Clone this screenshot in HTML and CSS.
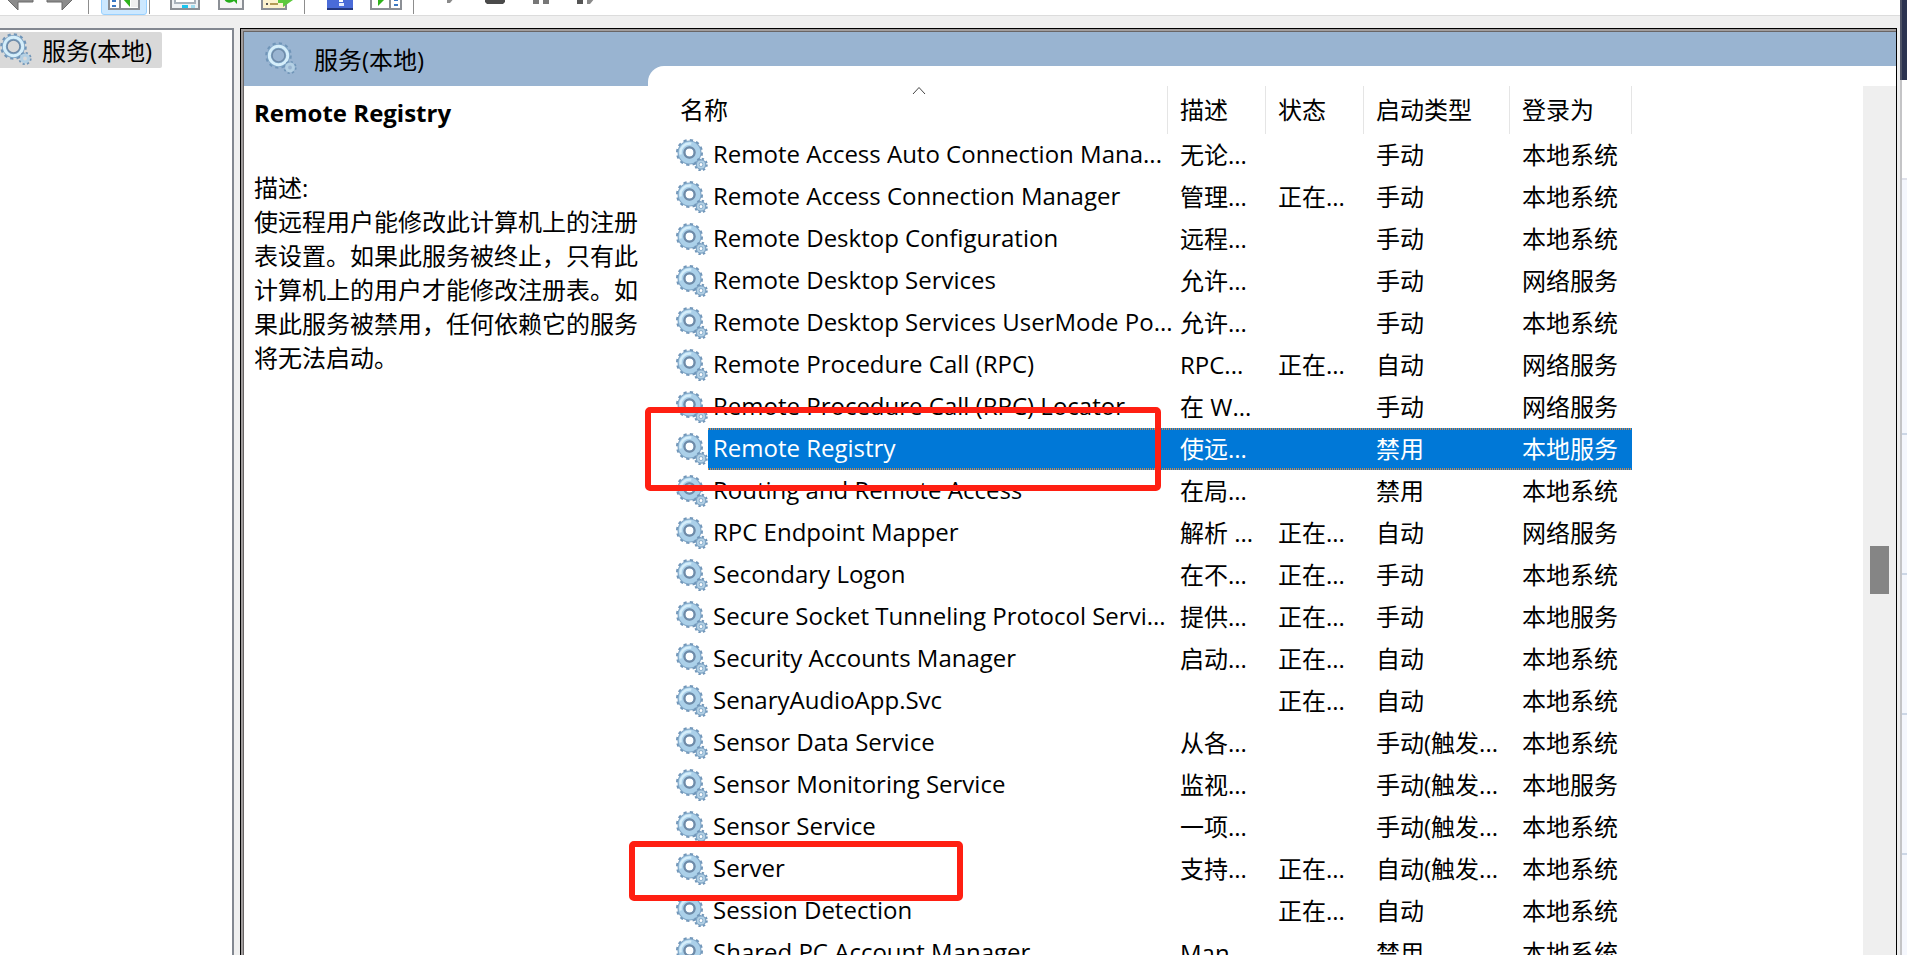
FILE: index.html
```
<!DOCTYPE html>
<html lang="zh-CN">
<head>
  <meta charset="UTF-8"/>
  <title>服务</title>
  <meta name="viewport" content="width=device-width,initial-scale=1"/>
  <link rel="stylesheet" href="styles.css">
</head>
<body>

<!-- Shared gear icons -->
<svg class="defs" aria-hidden="true">
  <symbol id="gear" viewBox="0 0 32 32">
    <g fill="none">
      <circle class="gear-teeth" cx="13.5" cy="13.5" r="12" stroke-width="3" stroke-dasharray="3.14 3.14"/>
      <circle class="gear-edge" cx="13.5" cy="13.5" r="8" stroke-width="8"/>
      <circle class="gear-body" cx="13.5" cy="13.5" r="8.4" stroke-width="5"/>
      <circle class="gear-shine" cx="13.5" cy="13.5" r="9" stroke-width="2.4" stroke-dasharray="18 38.5" stroke-dashoffset="-26"/>
      <circle class="gear-hole" cx="13.5" cy="13.5" r="5.2" stroke-width="2"/>
      <circle class="gear-teeth" cx="25" cy="25.5" r="5.6" stroke-width="2.4" stroke-dasharray="2.2 2.2"/>
      <circle class="gear-edge" cx="25" cy="25.5" r="3.4" stroke-width="3.8"/>
      <circle class="gear-small" cx="25" cy="25.5" r="3.2" stroke-width="1.8"/>
    </g>
  </symbol>
  <symbol id="gear-light" viewBox="0 0 32 32">
    <g fill="none">
      <circle class="gear-teeth" cx="13.5" cy="13.5" r="12" stroke-width="2.6" stroke-dasharray="3.14 3.14"/>
      <circle class="gear-edge" cx="13.5" cy="13.5" r="9" stroke-width="5"/>
      <circle class="gear-shine" cx="13.5" cy="13.5" r="9.200" stroke-width="3"/>
      <circle class="gear-hole" cx="13.5" cy="13.5" r="6.4" stroke-width="1.4"/>
      <circle class="gear-teeth" cx="25" cy="25.5" r="5.6" stroke-width="2" stroke-dasharray="2.2 2.2"/>
      <circle class="gear-small" cx="25" cy="25.5" r="3.4" stroke-width="3"/>
    </g>
  </symbol>
</svg>

<div class="screen">
  <div class="window">

    <!-- Toolbar -->
    <div class="toolbar">
      <button class="tool" title="后退">
        <svg viewBox="0 0 32 32"><path d="M2 17 15 5v10h15v7H15v8z" fill="#8c8c8c" stroke="#6b6b6b"/></svg>
      </button>
      <button class="tool" title="前进">
        <svg viewBox="0 0 32 32"><path d="M30 17 17 5v10H2v7h15v8z" fill="#8c8c8c" stroke="#6b6b6b"/></svg>
      </button>
      <span class="sep"></span>
      <button class="tool active" title="显示/隐藏控制台树">
        <svg viewBox="0 0 32 32"><path d="M1 3h30v26H1z" fill="#fff" stroke="#8b8f95" stroke-width="2"/><path d="M12 3v26" stroke="#8b8f95" stroke-width="2"/><path d="M4 17h4M4 21h4M4 26h4" stroke="#3a78c3" stroke-width="2"/><path d="M23 10v17h7V10" fill="#efefef"/><path d="M15 19l7-7v15z" fill="#2fb31b"/></svg>
      </button>
      <span class="sep"></span>
      <button class="tool" title="属性">
        <svg viewBox="0 0 32 32"><path d="M2 3h28v26H2z" fill="#eef1f4" stroke="#8b8f95" stroke-width="2"/><path d="M6 6h20v17H6z" fill="#fff" stroke="#a9b2bb" stroke-width="2"/><path d="M13 26.5h6" stroke="#1cc4ee" stroke-width="3"/><path d="M22 26.5h4" stroke="#9fdcef" stroke-width="3"/></svg>
      </button>
      <button class="tool" title="刷新">
        <svg viewBox="0 0 32 32"><path d="M4 3h24v26H4z" fill="#f5f5f5" stroke="#8b8f95" stroke-width="2"/><path d="M9 18c1 5 6 6 10 3l3 3v-8h-8l2 3c-2 1-4 1-5-1z" fill="#25ad1b"/></svg>
      </button>
      <button class="tool" title="导出列表">
        <svg viewBox="0 0 32 32"><path d="M1 3h24v26H1z" fill="#fdf3cf" stroke="#8b8f95" stroke-width="2"/><path d="M5 19h2M5 24h2" stroke="#555" stroke-width="2"/><path d="M9 19h7M9 24h8" stroke="#b49a55" stroke-width="2"/><path d="M17 17h7v-5l8 8-10 7v-4h-5z" fill="#5dc93e"/></svg>
      </button>
      <span class="sep"></span>
      <button class="tool" title="帮助">
        <svg viewBox="0 0 32 32"><path d="M3 3h26v27H3z" fill="#4a6bd8"/><path d="M3 29h26" stroke="#24387f" stroke-width="2"/><path d="M15 15h7v5h-3v2h-4z" fill="#fff"/><path d="M15 23h5v3h-5z" fill="#e6ecff"/></svg>
      </button>
      <button class="tool" title="显示/隐藏操作窗格">
        <svg viewBox="0 0 32 32"><path d="M1 3h30v26H1z" fill="#fff" stroke="#8b8f95" stroke-width="2"/><path d="M20 3v26" stroke="#8b8f95" stroke-width="2"/><path d="M8 12v14l7-7z" fill="#2fb31b"/><path d="M24 16h4M24 20h4M24 25h4" stroke="#3a78c3" stroke-width="2"/></svg>
      </button>
      <span class="sep"></span>
      <button class="tool" title="启动">
        <svg viewBox="0 0 32 32"><path d="M14 5v18h3l5-6z" fill="#8a8a8a"/></svg>
      </button>
      <button class="tool" title="停止">
        <svg viewBox="0 0 32 32"><path d="M6 6h20v16l-2 2H8l-2-2z" fill="#4a4a4a"/></svg>
      </button>
      <button class="tool" title="暂停">
        <svg viewBox="0 0 32 32"><path d="M8 6h6v18H8zM18 6h6v18h-6z" fill="#777"/></svg>
      </button>
      <button class="tool" title="重新启动">
        <svg viewBox="0 0 32 32"><path d="M6 6h6v18H6z" fill="#555"/><path d="M16 5v19h3l5-6z" fill="#8a8a8a"/></svg>
      </button>
    </div>

    <div class="content">
      <!-- Console tree -->
      <nav class="tree">
        <a class="tree-item" href="#services">
          <svg class="gear"><use href="#gear-light"/></svg>服务(本地)
        </a>
      </nav>

      <!-- Services -->
      <main class="pane" id="services">
        <header class="pane-head">
          <div class="pane-title">
            <svg class="gear"><use href="#gear-light"/></svg>服务(本地)
          </div>
          <div class="pane-tab"></div>
        </header>

        <div class="pane-body">
          <section class="detail">
            <h1>Remote Registry</h1>
            <p>描述:<br>使远程用户能修改此计算机上的注册表设置。如果此服务被终止，只有此计算机上的用户才能修改注册表。如果此服务被禁用，任何依赖它的服务将无法启动。</p>
          </section>

          <div class="list">
            <table>
              <colgroup>
                <col class="c-name"><col class="c-desc"><col class="c-state"><col class="c-start"><col class="c-logon">
              </colgroup>
              <thead>
                <tr>
                  <th>名称<svg class="sort" viewBox="0 0 14 9"><path d="M1 8 7 1.5 13 8" fill="none" stroke="#444"/></svg></th>
                  <th>描述</th><th>状态</th><th>启动类型</th><th>登录为</th>
                </tr>
              </thead>
              <tbody>
                <tr><td><div class="name"><svg class="gear"><use href="#gear"/></svg><span>Remote Access Auto Connection Mana...</span></div></td><td>无论...</td><td></td><td>手动</td><td>本地系统</td></tr>
                <tr><td><div class="name"><svg class="gear"><use href="#gear"/></svg><span>Remote Access Connection Manager</span></div></td><td>管理...</td><td>正在...</td><td>手动</td><td>本地系统</td></tr>
                <tr><td><div class="name"><svg class="gear"><use href="#gear"/></svg><span>Remote Desktop Configuration</span></div></td><td>远程...</td><td></td><td>手动</td><td>本地系统</td></tr>
                <tr><td><div class="name"><svg class="gear"><use href="#gear"/></svg><span>Remote Desktop Services</span></div></td><td>允许...</td><td></td><td>手动</td><td>网络服务</td></tr>
                <tr><td><div class="name"><svg class="gear"><use href="#gear"/></svg><span>Remote Desktop Services UserMode Po...</span></div></td><td>允许...</td><td></td><td>手动</td><td>本地系统</td></tr>
                <tr><td><div class="name"><svg class="gear"><use href="#gear"/></svg><span>Remote Procedure Call (RPC)</span></div></td><td>RPC...</td><td>正在...</td><td>自动</td><td>网络服务</td></tr>
                <tr><td><div class="name"><svg class="gear"><use href="#gear"/></svg><span>Remote Procedure Call (RPC) Locator</span></div></td><td>在 W...</td><td></td><td>手动</td><td>网络服务</td></tr>
                <tr class="selected"><td><div class="name"><svg class="gear"><use href="#gear"/></svg><span>Remote Registry</span></div></td><td>使远...</td><td></td><td>禁用</td><td>本地服务</td></tr>
                <tr><td><div class="name"><svg class="gear"><use href="#gear"/></svg><span>Routing and Remote Access</span></div></td><td>在局...</td><td></td><td>禁用</td><td>本地系统</td></tr>
                <tr><td><div class="name"><svg class="gear"><use href="#gear"/></svg><span>RPC Endpoint Mapper</span></div></td><td>解析 ...</td><td>正在...</td><td>自动</td><td>网络服务</td></tr>
                <tr><td><div class="name"><svg class="gear"><use href="#gear"/></svg><span>Secondary Logon</span></div></td><td>在不...</td><td>正在...</td><td>手动</td><td>本地系统</td></tr>
                <tr><td><div class="name"><svg class="gear"><use href="#gear"/></svg><span>Secure Socket Tunneling Protocol Servi...</span></div></td><td>提供...</td><td>正在...</td><td>手动</td><td>本地服务</td></tr>
                <tr><td><div class="name"><svg class="gear"><use href="#gear"/></svg><span>Security Accounts Manager</span></div></td><td>启动...</td><td>正在...</td><td>自动</td><td>本地系统</td></tr>
                <tr><td><div class="name"><svg class="gear"><use href="#gear"/></svg><span>SenaryAudioApp.Svc</span></div></td><td></td><td>正在...</td><td>自动</td><td>本地系统</td></tr>
                <tr><td><div class="name"><svg class="gear"><use href="#gear"/></svg><span>Sensor Data Service</span></div></td><td>从各...</td><td></td><td>手动(触发...</td><td>本地系统</td></tr>
                <tr><td><div class="name"><svg class="gear"><use href="#gear"/></svg><span>Sensor Monitoring Service</span></div></td><td>监视...</td><td></td><td>手动(触发...</td><td>本地服务</td></tr>
                <tr><td><div class="name"><svg class="gear"><use href="#gear"/></svg><span>Sensor Service</span></div></td><td>一项...</td><td></td><td>手动(触发...</td><td>本地系统</td></tr>
                <tr><td><div class="name"><svg class="gear"><use href="#gear"/></svg><span>Server</span></div></td><td>支持...</td><td>正在...</td><td>自动(触发...</td><td>本地系统</td></tr>
                <tr><td><div class="name"><svg class="gear"><use href="#gear"/></svg><span>Session Detection</span></div></td><td></td><td>正在...</td><td>自动</td><td>本地系统</td></tr>
                <tr><td><div class="name"><svg class="gear"><use href="#gear"/></svg><span>Shared PC Account Manager</span></div></td><td>Man...</td><td></td><td>禁用</td><td>本地系统</td></tr>
              </tbody>
            </table>

            <!-- Red marks over the list -->
            <div class="mark mark-registry"></div>
            <div class="mark mark-server"></div>
          </div>

          <div class="scrollbar"><div class="thumb"></div></div>
        </div>
      </main>
    </div>
  </div>

  <!-- Window behind -->
  <aside class="behind">
    <div class="behind-bar"></div>
    <div class="behind-gap"></div>
    <div class="behind-page tall"></div>
    <div class="behind-page"></div>
    <div class="behind-page"></div>
    <div class="behind-page"></div>
    <div class="behind-page"></div>
  </aside>
</div>

</body>
</html>
```
FILE: styles.css
```
* {
  box-sizing: border-box;
}
html, body {
  margin: 0; padding: 0; overflow: hidden; background: #fff;
}
body {
  font-family: "Open Sans", "Noto Sans CJK SC", sans-serif;
  font-size: 24px;
  color: #000;
}
.defs {
  position: absolute;
  width: 0; height: 0;
}
.screen {
  display: flex;
  height: 100vh;
}
.window {
  flex: 1;
  min-width: 0;
  display: flex;
  flex-direction: column;
  background: #efefef;
}

/* Toolbar */
.toolbar {
  display: flex;
  align-items: flex-end;
  flex: none;
  height: 16px;
  overflow: hidden;
  background: #fff;
  border-bottom: 1px solid #dcdcdc;
}
.tool {
  flex: none;
  width: 46px;
  height: 38px;
  padding: 0 0 3px;
  border: 0;
  background: none;
  display: flex;
  align-items: flex-end;
  justify-content: center;
}
.tool svg {
  flex: none;
  width: 32px;
  height: 32px;
}
.tool:first-child {
  width: 38px;
}
.tool.active {
  background: #cce8ff;
  border: 1px solid #99d1ff;
  border-radius: 3px;
  padding-bottom: 2px;
}
.sep {
  flex: none;
  width: 1px;
  height: 34px;
  margin: 0 12px 1px 4px;
  background: #8d8d8d;
}
.active + .sep {
  margin-left: 2px;
}

/* Gear icon */
.gear {
  flex: none;
  width: 32px;
  height: 32px;
}
.gear-teeth { stroke: #7095b8; }
.gear-edge { stroke: #7fa5c6; }
.gear-body { stroke: #abd0e9; }
.gear-shine { stroke: #d5eefa; }
.gear-hole { stroke: #6f8ba8; }
.gear-small { stroke: #b3d0e4; }
.selected .gear-teeth,
.selected .gear-edge { stroke: #2f7fc4; }
.selected .gear-body,
.selected .gear-small { stroke: #559fd9; }
.selected .gear-shine { stroke: #6fb2e4; }
.selected .gear-hole { stroke: #2a6fb0; }

/* Panes */
.content {
  flex: 1;
  min-height: 0;
  display: flex;
  gap: 6px;
  padding-top: 12px;
}
.tree {
  flex: none;
  width: 234px;
  padding-top: 2px;
  background: #fff;
  border: solid #828790;
  border-width: 2px 2px 0 0;
}
.tree-item {
  display: flex;
  align-items: center;
  gap: 10px;
  width: 162px;
  height: 36px;
  padding-bottom: 2px;
  background: #d9d9d9;
  border-radius: 0 2px 2px 0;
  color: #000;
  text-decoration: none;
}
.pane {
  flex: 1;
  min-width: 0;
  display: flex;
  flex-direction: column;
  margin-right: 3px;
  background: #fff;
  border: 1px solid #000;
  border-bottom: 0;
  box-shadow: inset 2px 2px 0 #a09c9c, inset 3px 3px 0 #696565;
  padding: 3px 0 0 3px;
}
.pane-head {
  flex: none;
  display: flex;
  height: 54px;
  background: #99b4d1;
}
.pane-title {
  flex: none;
  width: 404px;
  display: flex;
  align-items: center;
  gap: 17px;
  padding: 0 0 2px 21px;
}
.pane-tab {
  flex: 1;
  margin-top: 34px;
  background: #fff;
  border-top-left-radius: 16px;
}
.pane-body {
  flex: 1;
  min-height: 0;
  display: flex;
  overflow: hidden;
}
.detail {
  flex: none;
  width: 404px;
  padding: 10px 8px 0 10px;
}
.detail h1 {
  margin: 0 0 41px;
  font-size: 24px;
  line-height: 34px;
}
.detail p {
  margin: 0;
  line-height: 34px;
}

/* Services list */
.list {
  flex: 1;
  min-width: 0;
  position: relative;
  padding-left: 28px;
}
table {
  table-layout: fixed;
  width: 956px;
  border-collapse: collapse;
}
.c-name { width: 492px; }
.c-desc, .c-state { width: 98px; }
.c-start { width: 146px; }
.c-logon { width: 122px; }
th, td {
  padding: 0 0 0 12px;
  text-align: left;
  font-weight: normal;
  white-space: nowrap;
  line-height: 32px;
}
th {
  position: relative;
  height: 48px;
  box-shadow: inset -1px 0 #e5e5e5;
}
th:first-child {
  padding-left: 4px;
}
.sort {
  position: absolute;
  top: 0;
  left: 50%;
  width: 14px;
  height: 9px;
  margin-left: -10px;
}
td {
  height: 42px;
}
td:first-child {
  padding: 0;
}
.name {
  display: flex;
  align-items: center;
  height: 42px;
}
.name span {
  flex: 1;
  height: 42px;
  padding-left: 5px;
  line-height: 40px;
}
.selected td {
  color: #fff;
}
.selected .name span,
.selected td:not(:first-child) {
  background:
    repeating-linear-gradient(to right, #c08a58 0 1px, #0078d7 1px 2px) top / 100% 2px no-repeat,
    repeating-linear-gradient(to right, #c08a58 0 1px, #0078d7 1px 2px) bottom / 100% 2px no-repeat,
    #0078d7;
}
.mark {
  position: absolute;
  border: 6px solid #ff1f12;
  border-radius: 5px;
}
.mark-registry {
  top: 321px; left: -3px;
  width: 516px; height: 84px;
}
.mark-server {
  top: 755px; left: -19px;
  width: 334px; height: 60px;
}

/* Scrollbar */
.scrollbar {
  flex: none;
  width: 33px;
  padding: 460px 7px 0;
  background: #efefef;
}
.thumb {
  height: 48px;
  background: #858585;
}

/* Window behind */
.behind {
  flex: none;
  width: 7px;
  display: flex;
  flex-direction: column;
  border-left: 2px solid #c4c4c6;
  background: #fff;
}
.behind-bar {
  flex: none;
  height: 80px;
  margin-left: -2px;
  background: #2b3350;
  border-left: 2px solid #4d5265;
}
.behind-gap {
  flex: none;
  height: 100px;
  border-bottom: 2px solid #dfe1ea;
}
.behind-page {
  flex: none;
  height: 140px;
  background: #f5f7fd;
  border-bottom: 2px solid #cdd7e6;
}
.behind-page.tall {
  height: 255px;
}
```
